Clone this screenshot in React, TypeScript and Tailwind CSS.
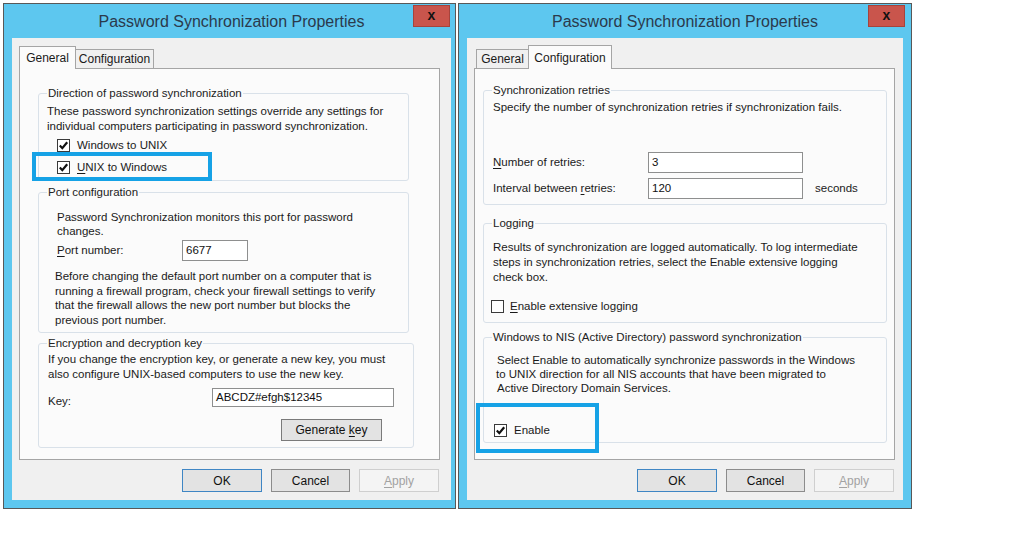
import React from 'react';

const Check = ({ checked }: { checked: boolean }) => (
  <span className="w-[13px] h-[13px] border border-[#3a3a3a] bg-white flex items-center justify-center shrink-0">
    {checked && (
      <svg width="11" height="11" viewBox="0 0 11 11">
        <path d="M1.8 5.6 L4.3 8.2 L9.2 2.2" fill="none" stroke="#111" strokeWidth="2.2" />
      </svg>
    )}
  </span>
);

const Group = ({ title, className, children }: { title: string; className: string; children: React.ReactNode }) => (
  <fieldset className={`border border-[#d9e1e9] rounded-[3px] ${className}`}>
    <legend className="ml-[8px] px-[1px] leading-[15px] text-[#222]">{title}</legend>
    {children}
  </fieldset>
);

const Input = ({ value, className }: { value: string; className: string }) => (
  <div className={`border border-[#8e8f8f] bg-white flex items-center pl-[3px] text-[#111] ${className}`}>{value}</div>
);

const Button = ({ children, className }: { children: React.ReactNode; className: string }) => (
  <div className={`h-[23px] flex items-center justify-center border ${className}`}>{children}</div>
);

const DialogButtons = () => (
  <div className="w-[421px] mt-[9px] pr-[1px] flex justify-end gap-[9px] text-[12px]">
    <Button className="w-[80px] border-[#3f86c4] bg-[#e3e3e3] text-[#111]">OK</Button>
    <Button className="w-[79px] border-[#8c8c8c] bg-[#e3e3e3] text-[#111]">Cancel</Button>
    <Button className="w-[80px] border-[#cfcfcf] bg-[#f4f4f4] text-[#a2a2a2]">
      <span><u className="underline-offset-2">A</u>pply</span>
    </Button>
  </div>
);

const TitleBar = ({ closeClass }: { closeClass: string }) => (
  <div className="relative h-[34px] flex items-center justify-center">
    <span className="text-[16px] text-[#2b3a4c] mt-[2px]">Password Synchronization Properties</span>
    <div className={`absolute top-[1px] w-[37px] h-[22px] bg-[#c9554c] border border-[#a6433c] flex items-center justify-center ${closeClass}`}>
      <span className="text-[14px] font-bold leading-none text-[#111] -mt-[2px]">x</span>
    </div>
  </div>
);

const GeneralPanel = () => (
  <div className="w-[421px] h-[392px] border border-[#a5a5a5] bg-[#fbfbfb] flex flex-col items-start">
    <Group title="Direction of password synchronization" className="mt-[17px] ml-[18px] w-[371px]">
      <div className="pl-[8px] pt-[3px] pb-[5px] leading-[15px]">
        <div>These password synchronization settings override any settings for</div>
        <div>individual computers participating in password synchronization.</div>
        <div className="mt-[4px] ml-[10px] h-[15px] flex items-center gap-[7px]">
          <Check checked />
          <span>Windows to UNIX</span>
        </div>
        <div className="relative mt-[7px] ml-[10px] h-[15px] flex items-center gap-[7px]">
          <Check checked />
          <span><u className="underline-offset-2">U</u>NIX to Windows</span>
          <div className="absolute left-[-25px] top-[-8px] w-[180px] h-[29px] border-[4px] border-[#16a2e6]" />
        </div>
      </div>
    </Group>
    <Group title="Port configuration" className="mt-[4px] ml-[18px] w-[371px]">
      <div className="pl-[18px] pt-[10px] pb-[5px]">
        <div className="leading-[14px]">
          <div>Password Synchronization monitors this port for password</div>
          <div>changes.</div>
        </div>
        <div className="mt-[2px] h-[21px] flex items-center">
          <span className="w-[125px]"><u className="underline-offset-2">P</u>ort number:</span>
          <Input value="6677" className="w-[66px] h-[21px]" />
        </div>
        <div className="mt-[8px] -ml-[2px] leading-[14.5px]">
          <div>Before changing the default port number on a computer that is</div>
          <div>running a firewall program, check your firewall settings to verify</div>
          <div>that the firewall allows the new port number but blocks the</div>
          <div>previous port number.</div>
        </div>
      </div>
    </Group>
    <Group title="Encryption and decryption key" className="mt-[3px] ml-[18px] w-[376px]">
      <div className="pl-[9px] pt-[1px] pb-[6px]">
        <div className="leading-[14.5px]">
          <div>If you change the encryption key, or generate a new key, you must</div>
          <div>also configure UNIX-based computers to use the new key.</div>
        </div>
        <div className="mt-[7px] flex items-start">
          <span className="w-[164px] mt-[6px] leading-[15px]">Key:</span>
          <Input value="ABCDZ#efgh$12345" className="w-[182px] h-[19px]" />
        </div>
        <Button className="mt-[10px] ml-[233px] w-[101px] !h-[22px] border-[#7a7a7a] bg-[#e3e3e3] text-[#111] text-[12px]">
          <span>Generate <u className="underline-offset-2">k</u>ey</span>
        </Button>
      </div>
    </Group>
  </div>
);

const ConfigPanel = () => (
  <div className="w-[421px] h-[392px] border border-[#a5a5a5] bg-[#fbfbfb] flex flex-col items-start">
    <Group title="Synchronization retries" className="mt-[14px] ml-[8px] w-[404px]">
      <div className="pl-[9px] pt-[2px] pb-[5px]">
        <div className="leading-[15px]">Specify the number of synchronization retries if synchronization fails.</div>
        <div className="mt-[37px] h-[21px] flex items-center">
          <span className="w-[155px]"><u className="underline-offset-2">N</u>umber of retries:</span>
          <Input value="3" className="w-[155px] h-[21px]" />
        </div>
        <div className="mt-[5px] h-[21px] flex items-center">
          <span className="w-[155px]">Interval between <u className="underline-offset-2">r</u>etries:</span>
          <Input value="120" className="w-[155px] h-[21px]" />
          <span className="ml-[12px]">seconds</span>
        </div>
      </div>
    </Group>
    <Group title="Logging" className="mt-[11px] ml-[8px] w-[404px]">
      <div className="pl-[9px] pt-[9px] pb-[8px]">
        <div className="leading-[15px]">
          <div>Results of synchronization are logged automatically. To log intermediate</div>
          <div>steps in synchronization retries, select the Enable extensive logging</div>
          <div>check box.</div>
        </div>
        <div className="mt-[14px] -ml-[2px] h-[15px] flex items-center gap-[6px]">
          <Check checked={false} />
          <span><u className="underline-offset-2">E</u>nable extensive logging</span>
        </div>
      </div>
    </Group>
    <Group title="Windows to NIS (Active Directory) password synchronization" className="mt-[7px] ml-[8px] w-[404px]">
      <div className="pl-[12px] pt-[8px] pb-[4px]">
        <div className="leading-[14px]">
          <div className="pl-[1px]">Select Enable to automatically synchronize passwords in the Windows</div>
          <div>to UNIX direction for all NIS accounts that have been migrated to</div>
          <div className="pl-[1px]">Active Directory Domain Services.</div>
        </div>
        <div className="relative mt-[28px] -ml-[2px] h-[15px] flex items-center gap-[7px]">
          <Check checked />
          <span>Enable</span>
          <div className="absolute left-[-18px] top-[-20px] w-[123px] h-[50px] border-[4px] border-[#16a2e6]" />
        </div>
      </div>
    </Group>
  </div>
);

export default function App() {
  return (
    <div className="w-[1022px] h-[533px] bg-white flex items-start pt-[3px] pl-[3px] gap-[2px] font-['Liberation_Sans',Arial,sans-serif] text-[11.5px] text-[#1a1a1a]">
      {/* General tab */}
      <div className="w-[453px] h-[506px] border border-[#585858] bg-[#5dc7ef] flex flex-col pl-[8px] pr-[4px]">
        <TitleBar closeClass="right-[1px]" />
        <div className="h-[462px] bg-[#f0f0f0] pt-[8px] pl-[7px]">
          <div className="h-[22px] flex items-end text-[12px]">
            <div className="relative z-10 w-[57px] h-[23px] -mb-[1px] border border-b-0 border-[#a5a5a5] bg-[#fbfbfb] flex items-center justify-center">General</div>
            <div className="w-[78px] h-[19px] border border-b-0 border-l-0 border-[#a5a5a5] bg-[#f0f0f0] flex items-center justify-center">Configuration</div>
          </div>
          <GeneralPanel />
          <DialogButtons />
        </div>
      </div>

      {/* Configuration tab */}
      <div className="w-[454px] h-[506px] border border-[#585858] bg-[#5dc7ef] flex flex-col px-[8px]">
        <TitleBar closeClass="right-[-2px]" />
        <div className="h-[462px] bg-[#f0f0f0] pt-[8px] pl-[7px]">
          <div className="h-[22px] flex items-end text-[12px]">
            <div className="ml-[2px] w-[52px] h-[19px] border border-b-0 border-r-0 border-[#a5a5a5] bg-[#f0f0f0] flex items-center justify-center">General</div>
            <div className="relative z-10 w-[84px] h-[24px] -mb-[1px] border border-b-0 border-[#a5a5a5] bg-[#fbfbfb] flex items-center justify-center">Configuration</div>
          </div>
          <ConfigPanel />
          <DialogButtons />
        </div>
      </div>
    </div>
  );
}
